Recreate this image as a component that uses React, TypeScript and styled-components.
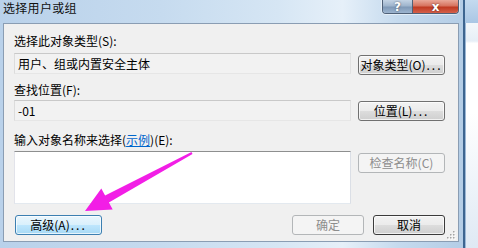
import React from "react";
import styled, { createGlobalStyle } from "styled-components";

const Global = createGlobalStyle`
  html, body { margin: 0; padding: 0; }
  body { width: 478px; height: 248px; overflow: hidden; background: #6e98c4; }
  * { box-sizing: border-box; }
`;

const FONT = `"Noto Sans CJK SC", "Noto Sans", sans-serif`;

const Screen = styled.div`
  position: relative;
  width: 478px;
  height: 248px;
  display: flex;
  overflow: hidden;
  font-family: ${FONT};
  font-size: 12px;
  color: #000;
`;

const Dialog = styled.div`
  width: 463px;
  height: 248px;
  display: flex;
  flex-direction: column;
  padding: 0 4px 6px 3px;
  background: linear-gradient(90deg, #b9d1ea 0%, #c6dbef 35%, #d6e6f4 60%, #e6f0f9 74%, #c5daee 86%, #b4cde6 100%);
`;

const TitleBar = styled.div`
  height: 23px;
  display: flex;
  align-items: flex-start;
  justify-content: space-between;
`;

const Title = styled.div`
  font-size: 12px;
  line-height: 16px;
  margin-top: 0;
  color: #111;
  letter-spacing: 0.3px;
`;

const Caption = styled.div`
  display: flex;
  height: 14px;
  border: 1px solid #4f6178;
  border-top: none;
  border-radius: 0 0 4px 4px;
  overflow: hidden;
  box-shadow: 0 0 0 1px rgba(255,255,255,0.5);
`;

const CapBtn = styled.div<{ $w: number; $close?: boolean }>`
  width: ${(p) => p.$w}px;
  height: 100%;
  display: flex;
  align-items: center;
  justify-content: center;
  color: #fff;
  font-family: "DejaVu Sans", sans-serif;
  font-weight: bold;
  font-size: 12px;
  line-height: 12px;
  text-shadow: 0 0 2px rgba(0,0,0,0.6);
  background: ${(p) =>
    p.$close
      ? "linear-gradient(180deg, #e9a899 0%, #d7735f 45%, #c03a22 55%, #d4604a 100%)"
      : "linear-gradient(180deg, #c3d3e4 0%, #9fb5cd 45%, #7f99b7 55%, #9cb4cf 100%)"};
  & + & { border-left: 1px solid #4f6178; }
`;

const Client = styled.div`
  position: relative;
  flex: 1;
  display: flex;
  flex-direction: column;
  background: #f0f0f0;
  border: 1px solid #8a9db3;
  padding: 8px 13px 0 10px;
`;

const Label = styled.div<{ $mt: number }>`
  height: 16px;
  line-height: 16px;
  margin-top: ${(p) => p.$mt}px;
  white-space: nowrap;
`;

const Link = styled.span`
  color: #0066cc;
  text-decoration: underline;
`;

const Dots = styled.span`
  letter-spacing: 2px;
  margin-left: 1px;
`;

const Row = styled.div<{ $mt: number }>`
  display: flex;
  align-items: flex-start;
  gap: 7px;
  margin-top: ${(p) => p.$mt}px;
`;

const Field = styled.div`
  width: 337px;
  height: 21px;
  padding: 0 3px;
  line-height: 19px;
  background: #f2f2f2;
  border: 1px solid;
  border-color: #c9c9c9 #e2e2e2 #e6e6e6 #dcdcdc;
  white-space: nowrap;
`;

const TextArea = styled.div`
  width: 337px;
  height: 53px;
  background: #fff;
  border: 1px solid;
  border-color: #8e8f8f #dbdfe6 #e3e9ef #e2e3ea;
`;

const Button = styled.div<{ $w: number; $mt?: number; $variant?: "normal" | "disabled" | "focus" | "default" }>`
  width: ${(p) => p.$w}px;
  height: 20px;
  margin-top: ${(p) => p.$mt ?? 0}px;
  flex: none;
  display: flex;
  align-items: center;
  justify-content: center;
  border-radius: 3px;
  line-height: 18px;
  white-space: nowrap;
  border: 1px solid
    ${(p) =>
      p.$variant === "disabled" ? "#b3b6b8" : p.$variant === "focus" ? "#3c7fb1" : p.$variant === "default" ? "#3b3b3b" : "#707070"};
  color: ${(p) => (p.$variant === "disabled" ? "#8d8d8d" : "#000")};
  background: ${(p) =>
    p.$variant === "disabled"
      ? "#f4f4f4"
      : p.$variant === "focus"
      ? "linear-gradient(180deg, #eaf6fd 0%, #d9f0fc 50%, #bee6fd 51%, #a7d9f5 100%)"
      : "linear-gradient(180deg, #f2f2f2 0%, #ebebeb 50%, #dddddd 51%, #cfcfcf 100%)"};
  box-shadow: inset 0 0 0 1px ${(p) => (p.$variant === "disabled" ? "#f4f4f4" : "rgba(255,255,255,0.7)")};
`;

const Footer = styled.div`
  display: flex;
  align-items: center;
  margin-top: 11px;
  padding-left: 1px;
`;

const Spacer = styled.div`
  flex: 1;
`;

const FooterRight = styled.div`
  display: flex;
  gap: 9px;
`;

const Grip = styled.svg`
  position: absolute;
  right: 2px;
  bottom: 1px;
`;

const Side = styled.div`
  flex: 1;
  height: 248px;
  display: flex;
  flex-direction: column;
  border-left: 2px solid #3d6590;
`;

const SideTop = styled.div`
  height: 23px;
  background: linear-gradient(180deg, #c4daef 0%, #a9c6e4 100%);
`;

const SideBody = styled.div`
  flex: 1;
  background: linear-gradient(180deg, #f3f7fb 0%, #e6eef7 8%, #ffffff 9%, #ffffff 40%, #dfe9f4 100%);
  border-left: 1px solid #9cb8d6;
`;

const ArrowSvg = styled.svg`
  position: absolute;
  left: 0;
  top: 0;
  pointer-events: none;
`;

export default function App() {
  return (
    <>
      <Global />
      <Screen>
        <Dialog>
          <TitleBar>
            <Title>选择用户或组</Title>
            <Caption>
              <CapBtn $w={29}>?</CapBtn>
              <CapBtn $w={46} $close>x</CapBtn>
            </Caption>
          </TitleBar>
          <Client>
            <Label $mt={1}>选择此对象类型(S):</Label>
            <Row $mt={4}>
              <Field>用户、组或内置安全主体</Field>
              <Button $w={87} $mt={2}>
                对象类型(O)<Dots>...</Dots>
              </Button>
            </Row>
            <Label $mt={7}>查找位置(F):</Label>
            <Row $mt={2}>
              <Field>-01</Field>
              <Button $w={87} $mt={1}>
                位置(L)<Dots>...</Dots>
              </Button>
            </Row>
            <Label $mt={11}>
              输入对象名称来选择(<Link>示例</Link>)(E):
            </Label>
            <Row $mt={3}>
              <TextArea />
              <Button $w={87} $mt={2} $variant="disabled">检查名称(C)</Button>
            </Row>
            <Footer>
              <Button $w={87} $variant="focus">
                高级(A)<Dots>...</Dots>
              </Button>
              <Spacer />
              <FooterRight>
                <Button $w={72} $variant="disabled">确定</Button>
                <Button $w={72} $variant="default">取消</Button>
              </FooterRight>
            </Footer>
            <Grip width="9" height="9" viewBox="0 0 9 9">
              {[
                [7, 1],
                [7, 4],
                [4, 4],
                [7, 7],
                [4, 7],
                [1, 7],
              ].map(([x, y], i) => (
                <g key={i}>
                  <rect x={x} y={y} width="1.5" height="1.5" fill="#fff" />
                  <rect x={x - 1} y={y - 1} width="1.5" height="1.5" fill="#a4a4a4" />
                </g>
              ))}
            </Grip>
          </Client>
        </Dialog>
        <Side>
          <SideTop />
          <SideBody />
        </Side>
        <ArrowSvg width="478" height="248" viewBox="0 0 478 248">
          <polygon
            points="191.5,152.1 105.1,195.5 101.3,188.5 85,211 112.7,209.5 108.9,202.5 192.5,153.9"
            fill="#f21ee6"
          />
        </ArrowSvg>
      </Screen>
    </>
  );
}
